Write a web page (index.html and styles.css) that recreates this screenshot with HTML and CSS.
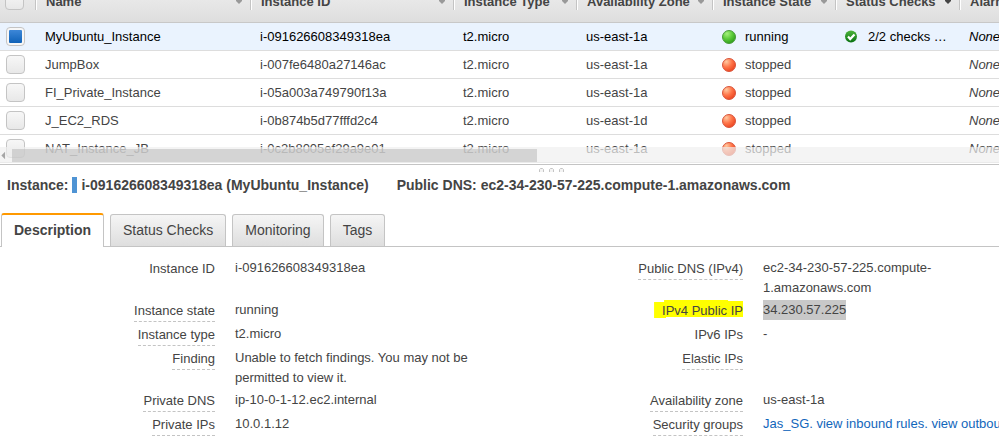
FILE: index.html
```html
<!DOCTYPE html>
<html lang="en">
<head>
<meta charset="utf-8">
<title>EC2 Instances</title>
<link rel="stylesheet" href="styles.css">
</head>
<body>
<svg class="defs" aria-hidden="true">
  <defs>
    <radialGradient id="green" cx="0.35" cy="0.25" r="0.8"><stop offset="0" stop-color="#a4f07c"/><stop offset="0.5" stop-color="#5ccb3a"/><stop offset="1" stop-color="#2c9a18"/></radialGradient>
    <radialGradient id="red" cx="0.3" cy="0.25" r="0.85"><stop offset="0" stop-color="#ffc9a0"/><stop offset="0.5" stop-color="#ff7448"/><stop offset="1" stop-color="#e8401c"/></radialGradient>
    <linearGradient id="ok" x1="0" y1="0" x2="0" y2="1"><stop offset="0" stop-color="#4fb53c"/><stop offset="1" stop-color="#087010"/></linearGradient>
    <symbol id="running" viewBox="0 0 14 14"><circle cx="7" cy="7" r="6.5" fill="url(#green)" stroke="#4a9a3c"/></symbol>
    <symbol id="stopped" viewBox="0 0 14 14"><circle cx="7" cy="7" r="6.5" fill="url(#red)" stroke="#d9553c"/></symbol>
    <symbol id="check" viewBox="0 0 14 14"><circle cx="6" cy="6.5" r="6" fill="url(#ok)"/><path d="M3 6.500l2.200 2.500L9.500 4.500" fill="none" stroke="#fff" stroke-width="2.200"/></symbol>
    <symbol id="sort" viewBox="0 0 8 6"><path d="M1 0h6v2L4 5 1 2z" fill="currentColor"/></symbol>
  </defs>
</svg>

<section class="grid-pane">
  <table class="instances">
    <colgroup><col class="c-check"><col class="c-name"><col class="c-id"><col class="c-type"><col class="c-zone"><col class="c-state"><col class="c-status"><col class="c-alarm"></colgroup>
    <thead>
      <tr>
        <th><input type="checkbox" aria-label="Select all"></th>
        <th><div class="head">Name<svg><use href="#sort"/></svg></div></th>
        <th><div class="head">Instance ID<svg><use href="#sort"/></svg></div></th>
        <th><div class="head">Instance Type<svg><use href="#sort"/></svg></div></th>
        <th><div class="head">Availability Zone<svg><use href="#sort"/></svg></div></th>
        <th><div class="head">Instance State<svg><use href="#sort"/></svg></div></th>
        <th><div class="head sorted">Status Checks<svg><use href="#sort"/></svg></div></th>
        <th><div class="head">Alarm Status</div></th>
      </tr>
    </thead>
    <tbody>
      <tr class="selected"><td><input type="checkbox" checked aria-label="Select MyUbuntu_Instance"></td><td>MyUbuntu_Instance</td><td>i-091626608349318ea</td><td>t2.micro</td><td>us-east-1a</td><td><div class="state"><svg><use href="#running"/></svg>running</div></td><td><div class="state"><svg><use href="#check"/></svg>2/2 checks …</div></td><td class="none">None</td></tr>
      <tr><td><input type="checkbox" aria-label="Select JumpBox"></td><td>JumpBox</td><td>i-007fe6480a27146ac</td><td>t2.micro</td><td>us-east-1a</td><td><div class="state"><svg><use href="#stopped"/></svg>stopped</div></td><td></td><td class="none">None</td></tr>
      <tr><td><input type="checkbox" aria-label="Select FI_Private_Instance"></td><td>FI_Private_Instance</td><td>i-05a003a749790f13a</td><td>t2.micro</td><td>us-east-1a</td><td><div class="state"><svg><use href="#stopped"/></svg>stopped</div></td><td></td><td class="none">None</td></tr>
      <tr><td><input type="checkbox" aria-label="Select J_EC2_RDS"></td><td>J_EC2_RDS</td><td>i-0b874b5d77fffd2c4</td><td>t2.micro</td><td>us-east-1d</td><td><div class="state"><svg><use href="#stopped"/></svg>stopped</div></td><td></td><td class="none">None</td></tr>
      <tr><td><input type="checkbox" aria-label="Select NAT_Instance_JB"></td><td>NAT_Instance_JB</td><td>i-0c2b8005ef29a9e01</td><td>t2.micro</td><td>us-east-1a</td><td><div class="state"><svg><use href="#stopped"/></svg>stopped</div></td><td></td><td class="none">None</td></tr>
    </tbody>
  </table>
  <div class="scrollbar"><svg class="scroll-left" viewBox="0 0 12 14"><path d="M5 3v8L1 7z" fill="#a6a6a6"/></svg><div class="track"><div class="thumb"></div></div></div>
</section>

<svg class="grip" viewBox="0 0 25 5" aria-hidden="true">
  <g fill="#f4f4f4" stroke="#c4c4c4"><path d="M.5 4V1.500l1-1h2l1 1V4"/><path d="M10.500 4V1.500l1-1h2l1 1V4"/><path d="M20.500 4V1.500l1-1h2l1 1V4"/></g>
</svg>

<header class="summary">
  <span>Instance:</span><i class="marker"></i><span>i-091626608349318ea (MyUbuntu_Instance)</span>
  <span class="dns">Public DNS: ec2-34-230-57-225.compute-1.amazonaws.com</span>
</header>

<div class="tabs" role="tablist">
  <button class="tab active" role="tab" aria-selected="true">Description</button>
  <button class="tab" role="tab">Status Checks</button>
  <button class="tab" role="tab">Monitoring</button>
  <button class="tab" role="tab">Tags</button>
</div>

<dl class="details">
  <dt>Instance ID</dt><dd>i-091626608349318ea</dd>
  <dt class="hint">Public DNS (IPv4)</dt><dd>ec2-34-230-57-225.compute-<wbr>1.amazonaws.com</dd>
  <dt class="hint">Instance state</dt><dd>running</dd>
  <dt class="marked">IPv4 Public IP</dt><dd><span class="picked">34.230.57.225</span></dd>
  <dt class="hint">Instance type</dt><dd>t2.micro</dd>
  <dt>IPv6 IPs</dt><dd>-</dd>
  <dt class="hint">Finding</dt><dd>Unable to fetch findings. You may not be permitted to view it.</dd>
  <dt class="hint">Elastic IPs</dt><dd></dd>
  <dt class="hint">Private DNS</dt><dd>ip-10-0-1-12.ec2.internal</dd>
  <dt class="hint">Availability zone</dt><dd>us-east-1a</dd>
  <dt class="hint">Private IPs</dt><dd>10.0.1.12</dd>
  <dt class="hint">Security groups</dt><dd class="links"><a href="#">Jas_SG.</a> <a href="#">view inbound rules.</a> <a href="#">view outbound rules</a></dd>
</dl>
</body>
</html>
```
FILE: styles.css
```css
* { box-sizing: border-box; }
html { overflow: hidden; }
body {
  margin: 0;
  background: #fff;
  color: #444;
  font: 13px/20px "Liberation Sans", Arial, sans-serif;
}
.defs { position: absolute; width: 0; height: 0; }

/* Instance list, scrolled so the header is partly out of view */
.grid-pane {
  position: relative;
  overflow: hidden;
  border-bottom: 1px solid #c4c4c4;
  padding-bottom: 1px;
}
.instances {
  table-layout: fixed;
  width: 100%;
  min-width: 999px;
  margin-top: -22px;
  border-collapse: separate;
  border-spacing: 0;
}
.c-check { width: 35px; }
.c-name { width: 215px; }
.c-id { width: 203px; }
.c-type { width: 123px; }
.c-zone { width: 136px; }
.c-state { width: 123px; }
.c-status { width: 124px; }
th, td {
  padding: 0 0 0 10px;
  text-align: left;
  white-space: nowrap;
  overflow: hidden;
}
th {
  height: 45px;
  padding: 0;
  background: linear-gradient(#f2f2f2, #dedede);
  border-bottom: 1px solid #c8c8c8;
}
td:first-child { padding-left: 6px; }
th:first-child { padding-left: 5px; }
td { height: 28px; border-bottom: 1px solid #ddd; }
.head {
  display: flex;
  align-items: center;
  justify-content: space-between;
  height: 20px;
  padding: 3px 7px 0 10px;
  border-left: 1px solid #c4c4c4;
  box-shadow: inset 1px 0 #fff;
}
.head svg { width: 8px; height: 6px; color: #999; flex: none; }
.sorted svg { color: #444; }
.selected td { background: #eaf3fe; color: #000; }
.none { font-style: italic; }

input[type="checkbox"] {
  appearance: none;
  display: block;
  width: 19px;
  height: 19px;
  margin: 0;
  border: 1px solid #c4c4c4;
  border-radius: 4px;
  background: linear-gradient(#f7f7f7, #e8e8e8);
}
input[type="checkbox"]:checked {
  padding: 2px;
  background: linear-gradient(#3d87d8, #0f62b8) content-box, #f7f7f7;
}
.state { display: flex; align-items: center; gap: 9px; }
.state svg { width: 14px; height: 14px; }

.scrollbar {
  position: absolute;
  left: 0;
  right: 0;
  bottom: 1px;
  display: flex;
  height: 16px;
  padding: 2px 0 1px;
  background: rgba(240, 240, 240, 0.7);
}
.scroll-left { width: 12px; flex: none; }
.track { flex: 1; display: flex; }
.thumb { width: 53.2%; background: rgba(180, 180, 180, 0.5); }

.grip { display: block; width: 25px; height: 5px; margin: 3px 0 0 54%; }

.summary {
  display: flex;
  align-items: center;
  height: 23px;
  padding-left: 7px;
  font-size: 14px;
  font-weight: bold;
  white-space: nowrap;
}
.marker { width: 5px; height: 16px; margin: 0 4px; background: #4f94d4; }
.dns { margin-left: 28px; }

.tabs {
  display: flex;
  align-items: flex-end;
  gap: 6px;
  height: 51px;
  padding-left: 1px;
  border-bottom: 1px solid #c4c4c4;
}
.tab {
  height: 32px;
  padding: 0 12px 2px;
  border: 1px solid #c4c4c4;
  border-bottom: 0;
  border-radius: 3px 3px 0 0;
  background: linear-gradient(#f5f5f5, #dedede);
  color: #444;
  font: 14px/20px "Liberation Sans", Arial, sans-serif;
}
.tab.active {
  height: 34px;
  margin-bottom: -1px;
  border-top: 2px solid #f90;
  background: #fff;
  font-weight: bold;
}

.details {
  display: grid;
  grid-template-columns: 215px minmax(0, 273fr) 215px minmax(0, 236fr);
  column-gap: 20px;
  align-items: start;
  margin: 11px 0 0;
}
dt {
  justify-self: end;
  margin-bottom: 2px;
  padding-top: 1px;
  line-height: 20px;
  border-bottom: 1px solid transparent;
}
dt.hint { border-bottom: 1px dashed #c4c4c4; }
dd { margin: 0; padding-bottom: 2px; }
.marked { position: relative; }
.marked::before {
  content: "";
  position: absolute;
  inset: 0 0 3px -8px;
  z-index: -1;
  background: #ff0;
  clip-path: polygon(0 2px, 10px 2px, 10px 0, 74px 0, 74px 1px, 100% 1px, 100% 17px, 12px 17px, 12px 100%, 0 100%);
}
.picked { display: inline-block; background: #c8c8c8; }
.links { white-space: nowrap; }
a { color: #1166bb; text-decoration: none; }
```
